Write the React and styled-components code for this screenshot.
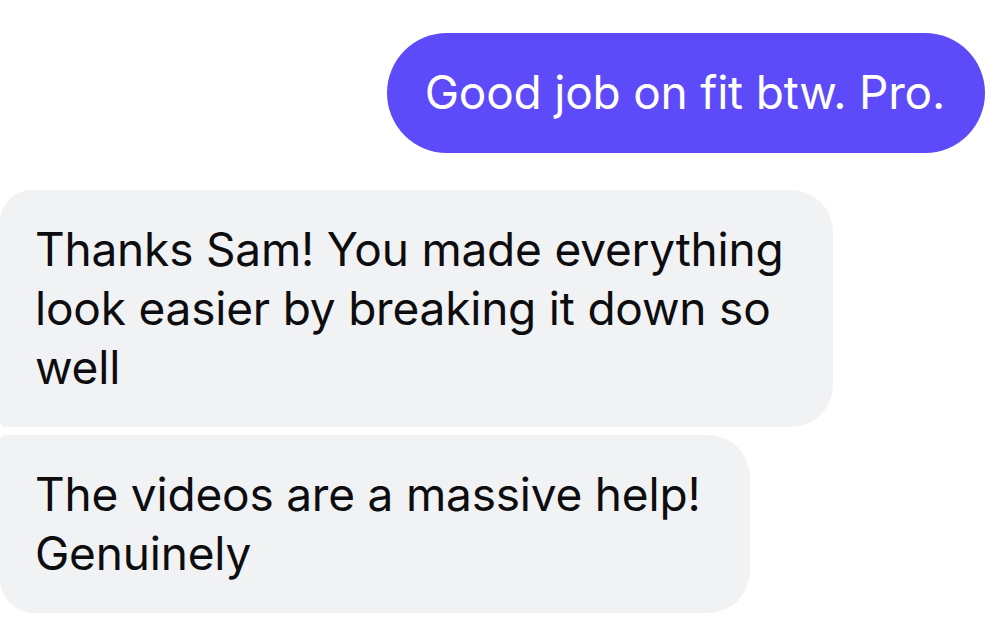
import React from "react";
import styled, { createGlobalStyle } from "styled-components";

const Global = createGlobalStyle`
  html, body { margin: 0; padding: 0; background: #ffffff; }
  body { font-family: Inter, "Noto Sans", "Liberation Sans", sans-serif; -webkit-font-smoothing: antialiased; }
`;

const Thread = styled.div`
  display: flex;
  flex-direction: column;
  width: 1007px;
  height: 629px;
  overflow: hidden;
  padding-top: 33px;
  box-sizing: border-box;
`;

const Bubble = styled.div`
  box-sizing: border-box;
  font-size: 46px;
  line-height: 59px;
  letter-spacing: -0.2px;
  padding: 30px 40px;
  width: fit-content;
  white-space: nowrap;
`;

const Outgoing = styled(Bubble)`
  align-self: flex-end;
  margin-right: 22px;
  background: #5d4af8;
  color: #ffffff;
  border-radius: 60px;
  padding: 30px 40px 31px 38px;
`;

const Incoming = styled(Bubble)`
  align-self: flex-start;
  background: #f1f2f4;
  color: #0d0d0f;
  padding: 30px 50px 30px 35px;
  margin-top: ${(p) => p.$gap}px;
  border-radius: ${(p) => (p.$first ? "32px 42px 42px 6px" : "6px 42px 42px 34px")};
`;

export default function App() {
  return (
    <>
      <Global />
      <Thread>
        <Outgoing>Good job on fit btw. Pro.</Outgoing>
        <Incoming $first $gap={37}>
          Thanks Sam! You made everything
          <br />
          look easier by breaking it down so
          <br />
          well
        </Incoming>
        <Incoming $gap={8}>
          The videos are a massive help!
          <br />
          Genuinely
        </Incoming>
      </Thread>
    </>
  );
}
